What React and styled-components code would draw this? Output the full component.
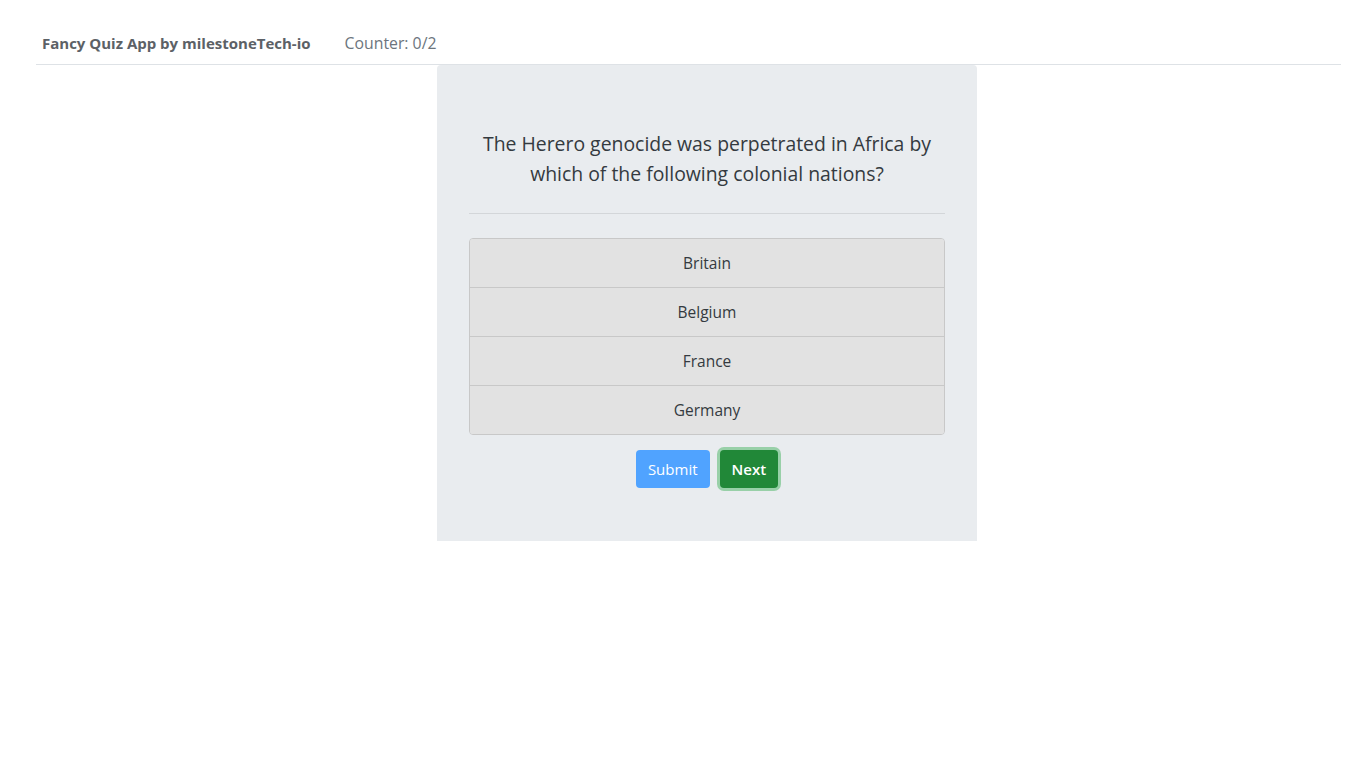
import React, { useState } from 'react';
import styled, { createGlobalStyle, css } from 'styled-components';

const GlobalStyle = createGlobalStyle`
  html, body {
    margin: 0;
    padding: 0;
    background: #fff;
    font-family: "Open Sans", "Liberation Sans", sans-serif;
    color: #343a40;
  }
`;

const Nav = styled.nav`
  display: flex;
  align-items: center;
  gap: 34px;
  height: 65px;
  margin: 0 25px 0 36px;
  padding: 21px 6px 0;
  box-sizing: border-box;
  border-bottom: 1px solid #dee2e6;
`;

const Brand = styled.span`
  font-size: 15px;
  font-weight: 700;
  color: #5c6166;
`;

const Counter = styled.span`
  font-size: 15.8px;
  color: #6c757d;
`;

const Page = styled.div`
  padding-left: 48px;
`;

const Card = styled.main`
  width: 540px;
  margin: 0 auto;
  padding: 64px 32px 53px;
  box-sizing: border-box;
  background: #e9ecef;
  border-radius: 4px 4px 0 0;
`;

const Question = styled.h2`
  margin: 0 0 8px;
  font-size: 19.4px;
  font-weight: 400;
  line-height: 30px;
  text-align: center;
  color: #343a40;
`;

const Divider = styled.hr`
  margin: 24px 0 24px;
  border: 0;
  border-top: 1px solid #d3d6d9;
`;

const Options = styled.ul`
  list-style: none;
  margin: 0;
  padding: 0;
  border: 1px solid #c8c8c8;
  border-radius: 4px;
  overflow: hidden;
`;

const Option = styled.li`
  height: 48px;
  display: flex;
  align-items: center;
  justify-content: center;
  background: ${(p) => (p.$active ? '#d4d4d4' : '#e2e2e2')};
  color: #343a40;
  font-size: 15.5px;
  cursor: pointer;
  & + & {
    border-top: 1px solid #c8c8c8;
  }
`;

const Actions = styled.div`
  display: flex;
  justify-content: center;
  gap: 10px;
  margin-top: 15px;
`;

const Button = styled.button`
  height: 38px;
  padding: 0 12px;
  border: 0;
  border-radius: 4px;
  font-family: inherit;
  font-size: 15px;
  color: #fff;
  cursor: pointer;
  ${(p) =>
    p.$variant === 'next'
      ? css`
          background: #218838;
          font-weight: 600;
          box-shadow: 0 0 0 3px rgba(72, 180, 97, 0.5);
        `
      : css`
          background: #50a3ff;
        `}
`;

const answers = ['Britain', 'Belgium', 'France', 'Germany'];

export default function App() {
  const [picked, setPicked] = useState(null);

  return (
    <>
      <GlobalStyle />
      <Nav>
        <Brand>Fancy Quiz App by milestoneTech-io</Brand>
        <Counter>Counter: 0/2</Counter>
      </Nav>
      <Page>
        <Card>
          <Question>
            The Herero genocide was perpetrated in Africa by
            <br />
            which of the following colonial nations?
          </Question>
          <Divider />
          <Options>
            {answers.map((a) => (
              <Option key={a} $active={picked === a} onClick={() => setPicked(a)}>
                {a}
              </Option>
            ))}
          </Options>
          <Actions>
            <Button>Submit</Button>
            <Button $variant="next">Next</Button>
          </Actions>
        </Card>
      </Page>
    </>
  );
}
